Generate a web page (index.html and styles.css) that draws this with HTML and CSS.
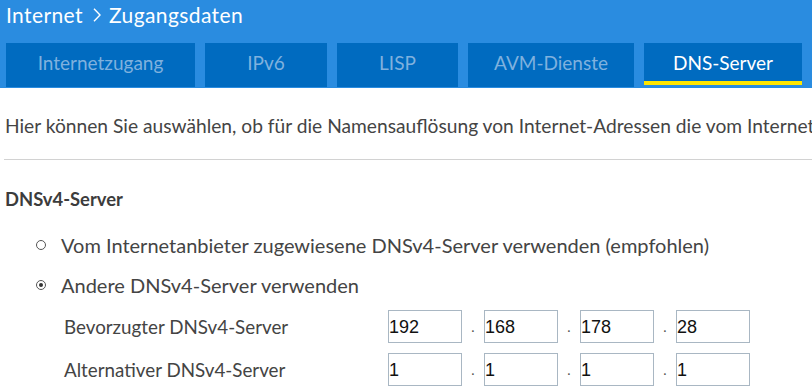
FILE: index.html
```html
<!DOCTYPE html>
<html lang="de">
<head>
<meta charset="utf-8">
<title>Internet &gt; Zugangsdaten</title>
<link rel="stylesheet" href="styles.css">
</head>
<body>
<header class="head">
  <h1 class="crumb">
    <span>Internet</span>
    <svg class="chev" width="8" height="14" viewBox="0 0 8 14" aria-hidden="true"><polyline points="1,0.8 7,7 1,13.2" fill="none" stroke="#fff" stroke-width="1.4"/></svg>
    <span>Zugangsdaten</span>
  </h1>
  <nav class="tabs">
    <a class="tab">Internetzugang</a>
    <a class="tab">IPv6</a>
    <a class="tab">LISP</a>
    <a class="tab">AVM-Dienste</a>
    <a class="tab active">DNS-Server</a>
  </nav>
</header>
<main class="content">
  <p class="intro">Hier können Sie auswählen, ob für die Namensauflösung von Internet-Adressen die vom Internetanbieter zugewiesenen DNS-Server verwendet werden.</p>
  <hr class="rule">
  <h2 class="section">DNSv4-Server</h2>
  <div class="option first"><span class="radio"></span><span>Vom Internetanbieter zugewiesene DNSv4-Server verwenden (empfohlen)</span></div>
  <div class="option second"><span class="radio checked"></span><span>Andere DNSv4-Server verwenden</span></div>
  <div class="ip-row">
    <span class="ip-label">Bevorzugter DNSv4-Server</span>
    <div class="ip">
      <span class="box">192</span><span class="dot">.</span>
      <span class="box">168</span><span class="dot">.</span>
      <span class="box">178</span><span class="dot">.</span>
      <span class="box">28</span>
    </div>
  </div>
  <div class="ip-row">
    <span class="ip-label">Alternativer DNSv4-Server</span>
    <div class="ip">
      <span class="box">1</span><span class="dot">.</span>
      <span class="box">1</span><span class="dot">.</span>
      <span class="box">1</span><span class="dot">.</span>
      <span class="box">1</span>
    </div>
  </div>
</main>
</body>
</html>
```
FILE: styles.css
```css
* { box-sizing: border-box; }
html, body { margin: 0; padding: 0; }
body {
  width: 812px;
  height: 392px;
  overflow: hidden;
  font-family: Lato, "Open Sans", sans-serif;
  color: #444;
  background: #fff;
}
.head {
  background: #2a8ce0;
  height: 88px;
  padding: 0 0 0 6px;
}
.crumb {
  margin: 0;
  height: 43px;
  display: flex;
  align-items: flex-start;
  font-size: 21px;
  line-height: 29px;
  font-weight: 400;
  letter-spacing: 0.4px;
  color: #fff;
}
.chev {
  margin: 8px 8px 0 10px;
  flex: none;
}
.tabs {
  display: grid;
  grid-template-columns: 189px 122px 121px 166px 158px;
  column-gap: 10px;
  align-items: start;
}
.tab {
  height: 44px;
  background: #006bc0;
  color: #7fb1de;
  font-size: 19px;
  display: flex;
  align-items: center;
  justify-content: center;
  padding-bottom: 6px;
}
.tab.active {
  height: 42px;
  color: #fff;
  box-shadow: inset 0 -4px 0 #ffe600;
  padding-bottom: 4px;
}
.content { padding: 0 0 0 5px; }
.intro {
  margin: 0;
  padding-top: 26px;
  font-size: 19.2px;
  line-height: 24px;
  white-space: nowrap;
  overflow: hidden;
  color: #444;
}
.rule {
  border: 0;
  border-top: 1px solid #d2d2d2;
  margin: 21px 0 0 -1px;
}
.section {
  margin: 0;
  padding-top: 27px;
  font-size: 18.4px;
  line-height: 24px;
  font-weight: 700;
  color: #3c3c3c;
}
.option {
  display: flex;
  align-items: center;
  height: 41px;
  font-size: 20px;
  line-height: 24px;
  padding-left: 31px;
}
.option.first { margin-top: 13px; }
.option.second { height: 40px; }
.radio {
  flex: none;
  width: 10px;
  height: 10px;
  border: 1px solid #555;
  border-radius: 50%;
  margin-right: 15px;
  display: flex;
  align-items: center;
  justify-content: center;
  background: #fff;
}
.radio.checked::after {
  content: "";
  width: 4px;
  height: 4px;
  border-radius: 50%;
  background: #333;
}
.ip-row {
  display: grid;
  grid-template-columns: 324px auto;
  align-items: center;
  height: 43px;
  line-height: 43px;
  padding-left: 59px;
  font-size: 18.8px;
}
.ip {
  display: flex;
  align-items: flex-start;
  line-height: normal;
}
.box {
  width: 74px;
  height: 33px;
  border: 1px solid #a9b7c3;
  font-family: "Liberation Sans", Arial, sans-serif;
  font-size: 18px;
  line-height: 29px;
  padding: 2px 0 0 0;
  color: #111;
}
.dot {
  width: 22px;
  height: 33px;
  text-align: center;
  color: #555;
  font-size: 14px;
  line-height: 33px;
}
```
